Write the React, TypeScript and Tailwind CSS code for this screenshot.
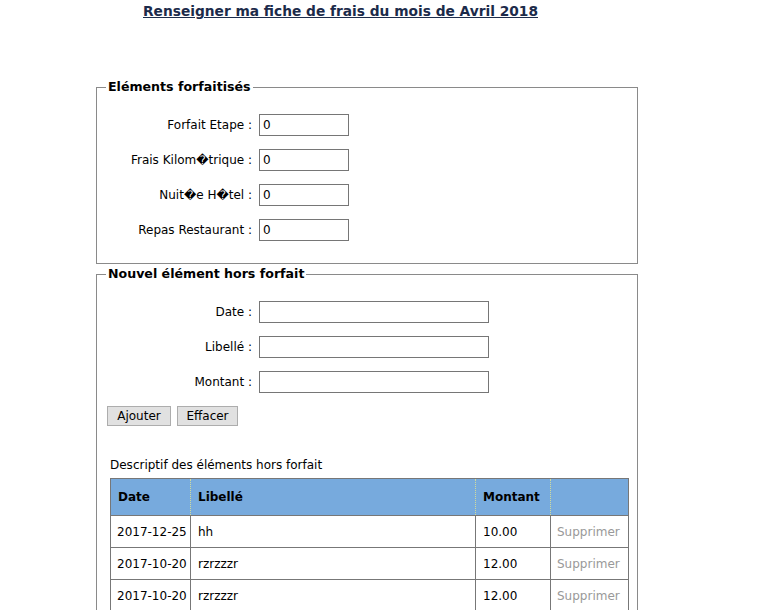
const forfaits = [
  { label: 'Forfait Etape', value: '0' },
  { label: 'Frais Kilom\uFFFDtrique', value: '0' },
  { label: 'Nuit\uFFFDe H\uFFFDtel', value: '0' },
  { label: 'Repas Restaurant', value: '0' },
]

const horsForfait = [
  { date: '2017-12-25', libelle: 'hh', montant: '10.00' },
  { date: '2017-10-20', libelle: 'rzrzzzr', montant: '12.00' },
  { date: '2017-10-20', libelle: 'rzrzzzr', montant: '12.00' },
]

function Row({ label, value, wide }: { label: string; value?: string; wide?: boolean }) {
  return (
    <div className="flex items-center h-[22px]">
      <label className="w-[162px] text-right pr-[7px] whitespace-nowrap">{label} :</label>
      <input
        readOnly
        value={value ?? ''}
        className={`${wide ? 'w-[230px]' : 'w-[90px]'} h-[22px] border border-[#767676] px-[3px] text-[12px] text-black outline-none`}
      />
    </div>
  )
}

export default function App() {
  return (
    <div className="w-[764px] h-[610px] overflow-hidden bg-white text-black text-[12px] font-['DejaVu_Sans',sans-serif]">
      <h2 className="pl-[143px] pt-[2px] text-[13.75px] font-bold leading-[18px] underline text-[#1c2b4a]">
        Renseigner ma fiche de frais du mois de Avril 2018
      </h2>

      <div className="ml-[96px] w-[542px] mt-[59px]">
        <fieldset className="border border-[#8a8a8a] pl-0 pb-[22px]">
          <legend className="ml-[9px] px-[2px] text-[12.6px] font-bold leading-[16px]">Eléments forfaitisés</legend>
          <div className="flex flex-col gap-[13px] pt-[19px]">
            {forfaits.map((f) => (
              <Row key={f.label} label={f.label} value={f.value} />
            ))}
          </div>
        </fieldset>

        <fieldset className="border border-[#8a8a8a] mt-[2px] pl-0">
          <legend className="ml-[9px] px-[2px] text-[12.6px] font-bold leading-[16px]">Nouvel élément hors forfait</legend>
          <div className="flex flex-col gap-[13px] pt-[19px]">
            <Row label="Date" wide />
            <Row label="Libellé" wide />
            <Row label="Montant" wide />
          </div>
          <div className="flex gap-[6px] pl-[10px] mt-[13px]">
            <button className="h-[20px] w-[64px] border border-[#adadad] bg-[#e1e1e1] text-[12px]">Ajouter</button>
            <button className="h-[20px] w-[61px] border border-[#adadad] bg-[#e1e1e1] text-[12px]">Effacer</button>
          </div>

          <div className="pl-[13px] mt-[31px] leading-[16px]">Descriptif des éléments hors forfait</div>
          <table className="ml-[13px] mt-[5px] w-[518px] table-fixed border-collapse border border-[#777] text-[12px]">
            <thead>
              <tr className="bg-[#77aadd] h-[37px] text-left">
                <th className="w-[80px] pl-[7px] font-bold border-r border-dotted border-r-[#d3dc9a]">Date</th>
                <th className="w-[285px] pl-[7px] font-bold border-r border-dotted border-r-[#d3dc9a]">Libellé</th>
                <th className="w-[75px] pl-[7px] font-bold whitespace-nowrap border-r border-dotted border-r-[#d3dc9a]">Montant</th>
                <th className="w-[78px]"></th>
              </tr>
            </thead>
            <tbody>
              {horsForfait.map((r, i) => (
                <tr key={i} className="h-[32px]">
                  <td className="border border-[#777] pl-[6px] whitespace-nowrap">{r.date}</td>
                  <td className="border border-[#777] pl-[7px]">{r.libelle}</td>
                  <td className="border border-[#777] pl-[7px]">{r.montant}</td>
                  <td className="border border-[#777] pl-[6px] text-[#999] whitespace-nowrap">Supprimer</td>
                </tr>
              ))}
            </tbody>
          </table>
          <div className="h-[20px]" />
        </fieldset>
      </div>
    </div>
  )
}
